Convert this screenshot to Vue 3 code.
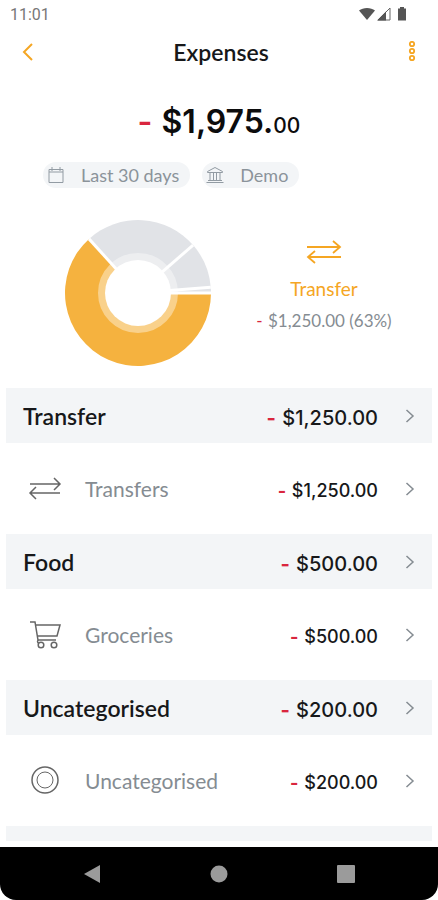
<template>
  <div class="screen">
    <div class="status-bar">
      <span>11:01</span>
      <svg class="status-icons" viewBox="0 0 50 16" aria-hidden="true">
        <path d="M1 4.5C5 1 13 1 17 4.5L9 14Z" fill="#555" />
        <path d="M20 14L32 2V14Z" fill="#fff" stroke="#666" />
        <path d="M19 14.5L28 5.500V14.500Z" fill="#555" />
        <path d="M42 1h4v1.500h2v12h-8V2.500h2z" fill="#555" />
      </svg>
    </div>

    <header class="header">
      <button class="icon-button" aria-label="Back">
        <svg width="12" height="18" viewBox="0 0 12 18">
          <path d="M10 1L2 9l8 8" fill="none" stroke="#f5a623" stroke-width="2" />
        </svg>
      </button>
      <h1>Expenses</h1>
      <button class="icon-button more" aria-label="More options">
        <svg width="8" height="22" viewBox="0 0 8 22">
          <g fill="none" stroke="#f5a623" stroke-width="1.800">
            <circle cx="4" cy="3" r="2.200" />
            <circle cx="4" cy="10" r="2.200" />
            <circle cx="4" cy="17" r="2.200" />
          </g>
        </svg>
      </button>
    </header>

    <div class="total">
      <span class="minus">-</span> $1,975.<small>00</small>
    </div>

    <div class="filters">
      <button class="chip">
        <svg width="18" height="18" viewBox="0 0 18 18">
          <path
            d="M2 3.500h14v13H2zM2 6h14M5 1v4M13 1v4"
            fill="none"
            stroke="#929ba3"
          />
        </svg>
        <span>Last 30 days</span>
      </button>
      <button class="chip">
        <svg width="18" height="18" viewBox="0 0 18 18">
          <path
            d="M1.500 5.500L9 1.500l7.500 4v1h-15zM4 7v7M7.500 7v7M10.500 7v7M14 7v7M2 14.500h14M0.500 16.500h17"
            fill="none"
            stroke="#929ba3"
          />
        </svg>
        <span>Demo</span>
      </button>
    </div>

    <section class="summary">
      <svg class="donut" viewBox="-74 -74 148 148" role="img" aria-label="Expenses by category">
        <path
          v-for="slice in slices"
          :key="slice.name"
          :d="slice.path"
          :fill="slice.color"
        />
        <circle r="36" fill="none" stroke="#fff" stroke-opacity="0.400" stroke-width="8" />
        <path
          v-for="slice in slices"
          :key="slice.name + '-gap'"
          :d="slice.gap"
          stroke="#fff"
          stroke-width="3"
        />
        <circle r="33" fill="#fff" />
      </svg>
      <div class="selected">
        <svg width="36" height="26" viewBox="0 0 36 26" aria-hidden="true">
          <path
            d="M1 8h33M27 2l7 6-7 6M35 18H2M9 12l-7 6 7 6"
            fill="none"
            stroke="#f5a623"
            stroke-width="1.800"
          />
        </svg>
        <div class="selected-name">Transfer</div>
        <div class="selected-amount"><span class="minus">-</span> $1,250.00 (63%)</div>
      </div>
    </section>

    <main class="list">
      <template v-for="group in groups" :key="group.name">
        <a href="#" class="row group">
          <span class="name">{{ group.name }}</span>
          <span class="amount"><span class="minus">-</span> {{ group.amount }}</span>
          <svg class="chevron" viewBox="0 0 10 14">
            <path d="M1.500 1l6.500 6-6.500 6" />
          </svg>
        </a>
        <a href="#" class="row item">
          <svg class="item-icon" viewBox="0 0 34 32">
            <path v-if="group.icon === 'transfer'" d="M2 11h30M26 5l6 6-6 6M32 20H2M8 14l-6 6 6 6" />
            <g v-else-if="group.icon === 'cart'">
              <path d="M2 3h5l3 18h18M8 6h24l-3 11H9.500M11 21c-2 0-2 3 0 3" />
              <circle cx="13" cy="26" r="2.800" />
              <circle cx="26" cy="26" r="2.800" />
            </g>
            <g v-else>
              <circle cx="17" cy="15" r="13" />
              <circle cx="17" cy="15" r="8" stroke-width="1" />
            </g>
          </svg>
          <span class="name">{{ group.item }}</span>
          <span class="amount"><span class="minus">-</span> {{ group.amount }}</span>
          <svg class="chevron" viewBox="0 0 10 14">
            <path d="M1.500 1l6.500 6-6.500 6" />
          </svg>
        </a>
      </template>
      <div class="row group"></div>
    </main>

    <nav class="nav-bar">
      <button aria-label="Back">
        <svg width="18" height="18" viewBox="0 0 18 18"><path d="M1 9L17 0v18z" /></svg>
      </button>
      <button aria-label="Home">
        <svg width="18" height="18" viewBox="0 0 18 18"><circle cx="9" cy="9" r="8.500" /></svg>
      </button>
      <button aria-label="Recent apps">
        <svg width="18" height="18" viewBox="0 0 18 18"><rect width="18" height="18" rx="1" /></svg>
      </button>
    </nav>
  </div>
</template>

<script setup>
import { computed } from "vue";

const groups = [
  { name: "Transfer", item: "Transfers", amount: "$1,250.00", icon: "transfer" },
  { name: "Food", item: "Groceries", amount: "$500.00", icon: "cart" },
  { name: "Uncategorised", item: "Uncategorised", amount: "$200.00", icon: "target" },
];

const shares = [
  { name: "Transfer", value: 1250, color: "#f5b23f" },
  { name: "Food", value: 500, color: "#e1e3e7" },
  { name: "Uncategorised", value: 200, color: "#e1e3e7" },
  { name: "Other", value: 25, color: "#e1e3e7" },
];

const RADIUS = 73;

const pointAt = (angle) =>
  `${(RADIUS * Math.cos(angle)).toFixed(2)} ${(RADIUS * Math.sin(angle)).toFixed(2)}`;

// Slices run clockwise, starting from the right-hand side
const slices = computed(() => {
  const total = shares.reduce((sum, share) => sum + share.value, 0);
  let start = 0;
  return shares.map((share) => {
    const sweep = (share.value / total) * Math.PI * 2;
    const end = start + sweep;
    const large = sweep > Math.PI ? 1 : 0;
    const path = `M0 0L${pointAt(start)}A${RADIUS} ${RADIUS} 0 ${large} 1 ${pointAt(end)}Z`;
    const gap = `M0 0L${pointAt(start)}`;
    start = end;
    return { ...share, path, gap };
  });
});
</script>

<style>
body {
  margin: 0;
  background: #fff;
}
</style>

<style scoped>
.screen {
  display: flex;
  flex-direction: column;
  height: 100vh;
  overflow: hidden;
  background: #fff;
  color: #17181a;
  font-family: Lato, "Liberation Sans", sans-serif;
}

button {
  padding: 0;
  border: none;
  background: none;
  font-family: inherit;
  cursor: pointer;
}

svg {
  display: block;
  flex-shrink: 0;
}

.status-bar {
  display: flex;
  flex-shrink: 0;
  align-items: center;
  justify-content: space-between;
  height: 28px;
  padding: 0 30px 0 10px;
  color: #777;
  font-family: Roboto, sans-serif;
  font-size: 16px;
}

.status-icons {
  width: 50px;
  height: 16px;
}

.header {
  display: flex;
  flex-shrink: 0;
  align-items: center;
  justify-content: space-between;
  height: 48px;
  padding: 0 16px;
}

.header h1 {
  margin: 0;
  font-size: 23px;
  font-weight: 600;
}

.icon-button {
  display: flex;
  justify-content: center;
  width: 24px;
}

.more {
  width: 20px;
}

.minus {
  margin-right: 1px;
  color: #d9263e;
}

.total {
  flex-shrink: 0;
  padding-top: 26px;
  color: #0c0c0d;
  font-family: Inter, sans-serif;
  font-size: 32px;
  font-weight: 600;
  line-height: 40px;
  text-align: center;
}

.total small {
  font-size: 21px;
  font-weight: 500;
}

.filters {
  display: flex;
  flex-shrink: 0;
  gap: 12px;
  padding: 16px 43px 0;
}

.chip {
  display: flex;
  align-items: center;
  gap: 16px;
  height: 26px;
  padding: 0 11px 0 4px;
  border-radius: 13px;
  background: #f3f5f7;
  color: #8b939a;
  font-size: 18px;
}

.summary {
  display: flex;
  flex-shrink: 0;
  align-items: center;
  padding: 31px 28px 21px 64px;
}

.donut {
  width: 148px;
  height: 148px;
}

.selected {
  display: flex;
  flex: 1;
  flex-direction: column;
  align-items: center;
  margin-left: 26px;
  padding-bottom: 14px;
  white-space: nowrap;
}

.selected-name {
  margin-top: 12px;
  color: #f5a623;
  font-size: 19px;
  line-height: 24px;
}

.selected-amount {
  margin-top: 8px;
  color: #858c92;
  font-size: 17px;
  line-height: 24px;
}

.list {
  flex: 1;
  min-height: 0;
  margin: 0 6px 6px;
  overflow: hidden;
}

.row {
  display: flex;
  align-items: center;
  box-sizing: border-box;
  padding: 0 17px;
  color: inherit;
  text-decoration: none;
}

.group {
  height: 55px;
  background: #f3f5f7;
  font-size: 23px;
  font-weight: 600;
}

.item {
  height: 91px;
  padding-left: 22px;
  font-size: 21px;
}

.item-icon {
  width: 34px;
  height: 32px;
  margin-right: 23px;
  fill: none;
  stroke: #666;
  stroke-width: 1.500;
}

.item .name {
  color: #858c92;
}

.amount {
  margin-left: auto;
  padding-top: 4px;
  font-family: Inter, sans-serif;
  font-size: 20px;
  font-weight: 500;
}

.item .amount {
  font-size: 18px;
}

.amount .minus {
  font-weight: 700;
}

.chevron {
  width: 10px;
  height: 14px;
  margin-left: 27px;
  fill: none;
  stroke: #858c92;
  stroke-width: 1.500;
}

.nav-bar {
  display: flex;
  flex-shrink: 0;
  align-items: center;
  height: 53px;
  padding: 0 28px;
  border-radius: 0 0 16px 16px;
  box-sizing: border-box;
  background: #000;
}

.nav-bar button {
  display: flex;
  flex: 1;
  justify-content: center;
}

.nav-bar svg {
  fill: #9b9b9b;
}
</style>
